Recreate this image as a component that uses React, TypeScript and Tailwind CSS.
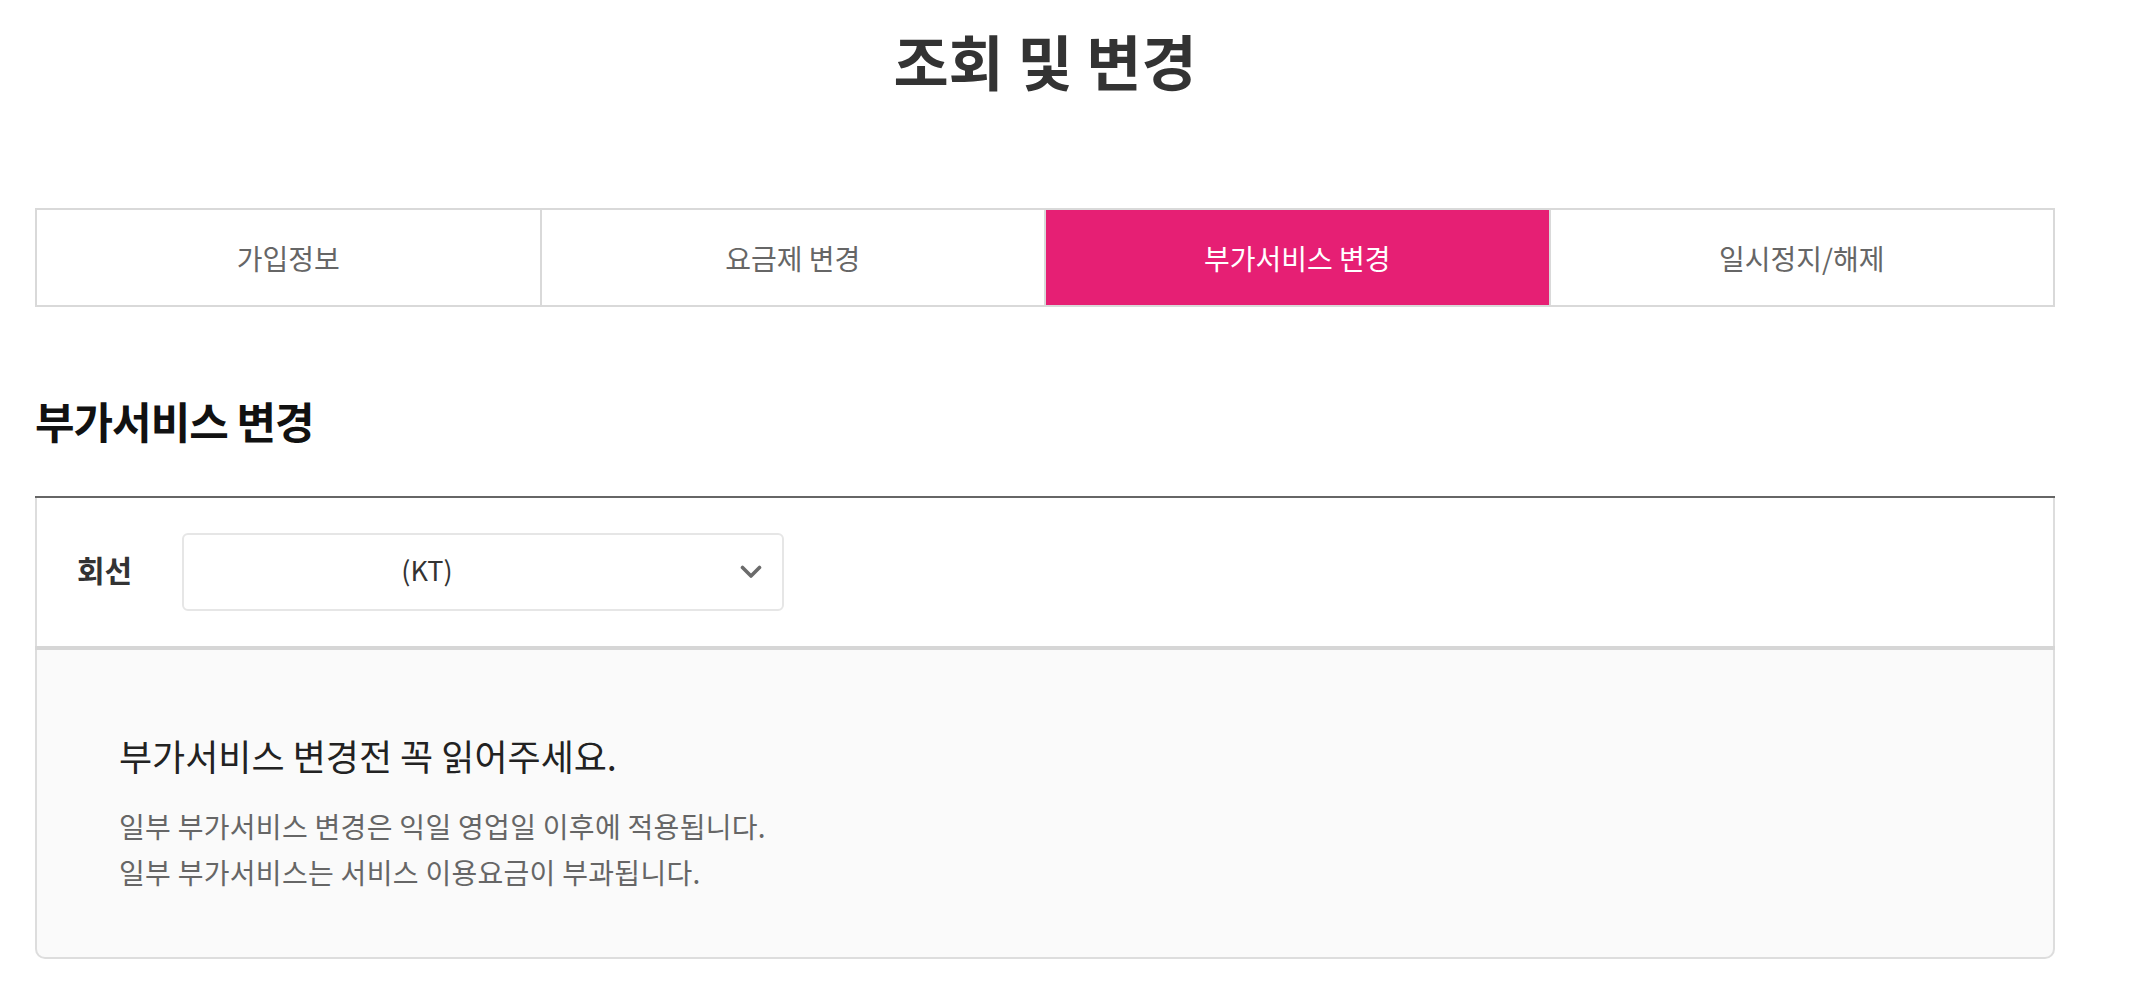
import React from 'react';

const tabs = ['가입정보', '요금제 변경', '부가서비스 변경', '일시정지/해제'];
const activeTab = 2;

function Chevron() {
  return (
    <svg width="22" height="14" viewBox="0 0 22 14" fill="none" className="absolute right-[20px] top-1/2 -translate-y-1/2">
      <polyline points="2.5,2.5 11,11 19.5,2.5" stroke="#6b6b6b" strokeWidth="3.6" strokeLinecap="round" strokeLinejoin="round" />
    </svg>
  );
}

export default function App() {
  return (
    <div className="min-h-screen bg-white font-['Noto_Sans_CJK_KR',sans-serif]">
      <div className="ml-[35px] w-[2020px]">
        {/* page title */}
        <h1 className="pt-[30px] text-center text-[60px] leading-[60px] font-bold text-[#333333]">조회 및 변경</h1>

        {/* tabs */}
        <nav className="mt-[118px] flex h-[99px] border-2 border-[#d9d9d9]">
          {tabs.map((label, i) => {
            const isActive = i === activeTab;
            return (
              <button
                key={label}
                className={
                  (i > 0 ? 'border-l-2 border-[#d9d9d9] ' : '') +
                  (isActive ? 'bg-[#e61f74] text-white ' : 'bg-white text-[#666666] ') +
                  'flex-1 flex items-center justify-center text-[28px] leading-[34px]'
                }
              >
                {label}
              </button>
            );
          })}
        </nav>

        {/* section */}
        <h2 className="mt-[88px] text-[43px] leading-[50px] font-bold tracking-[-1px] text-[#111111]">부가서비스 변경</h2>

        <div className="mt-[51px] border-t-2 border-[#666666]">
          <div className="flex items-center h-[148px] bg-white border-x-2 border-[#dddddd]">
            <span className="w-[145px] pl-[40px] text-[30px] leading-[36px] font-bold text-[#333333] -mt-[6px]">회선</span>
            <div className="relative flex items-center justify-center w-[602px] h-[78px] pr-[112px] rounded-[6px] border-2 border-[#e6e6e6] bg-white text-[27px] leading-[34px] text-[#333333]">
              <span className="-mt-[4px]">(KT)</span>
              <Chevron />
            </div>
          </div>

          <div className="border-t-[4px] border-[#d6d6d6]">
            <div className="bg-[#fafafa] border-x-2 border-b-2 border-[#dddddd] rounded-b-[10px] pl-[82px] pt-[83px] pb-[62px]">
              <p className="text-[36px] leading-[44px] font-normal text-[#222222]">부가서비스 변경전 꼭 읽어주세요.</p>
              <div className="mt-[26px] text-[28px] leading-[46px] tracking-[0.3px] text-[#666666]">
                <p>일부 부가서비스 변경은 익일 영업일 이후에 적용됩니다.</p>
                <p>일부 부가서비스는 서비스 이용요금이 부과됩니다.</p>
              </div>
            </div>
          </div>
        </div>
      </div>
    </div>
  );
}
